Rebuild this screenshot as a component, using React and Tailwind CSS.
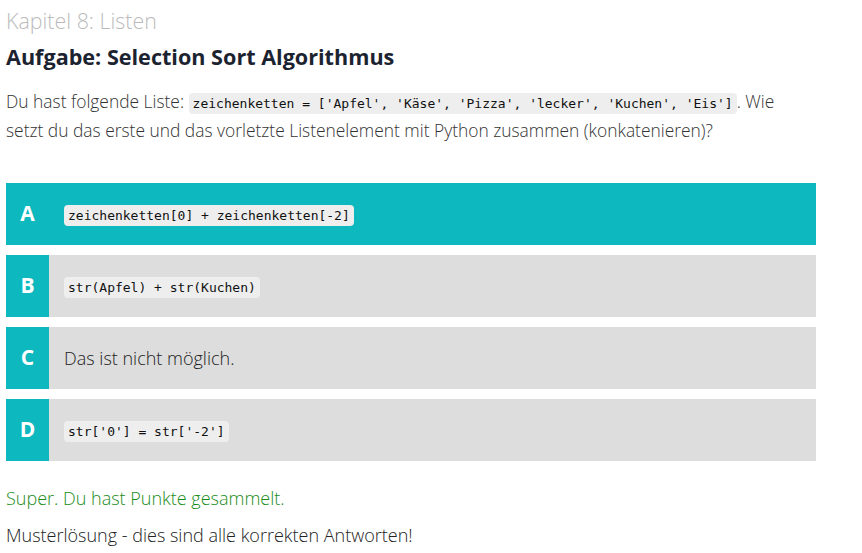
import React from 'react'

const sans = { fontFamily: '"Open Sans", "Liberation Sans", sans-serif' }

const Code = ({ children }) => (
  <code className="rounded-[4px] bg-[#eeeeee] px-[4px] py-[3px] font-['DejaVu_Sans_Mono',monospace] text-[13px] text-[#111]">
    {children}
  </code>
)

const options = [
  { letter: 'A', content: <Code>zeichenketten[0] + zeichenketten[-2]</Code>, selected: true },
  { letter: 'B', content: <Code>str(Apfel) + str(Kuchen)</Code> },
  { letter: 'C', content: <span className="text-[18px] font-light text-[#222]">Das ist nicht möglich.</span> },
  { letter: 'D', content: <Code>str['0'] = str['-2']</Code> },
]

const Option = ({ letter, content, selected }) => (
  <div className={selected ? 'flex h-[62px] items-center bg-[#0db8be]' : 'flex h-[62px] items-center bg-[#dddddd]'}>
    <div className="flex h-full w-[43px] items-center justify-center bg-[#0db8be] text-[21px] font-bold text-white">
      {letter}
    </div>
    <div className="pl-[15px]">{content}</div>
  </div>
)

export default function App() {
  return (
    <div className="min-h-[553px] bg-white px-[6px] pt-[6px]" style={sans}>
      <div className="w-[810px]">
        <h2 className="text-[21.4px] font-light leading-[30px] text-[#bbbbbb]">Kapitel 8: Listen</h2>
        <h1 className="mt-[7px] text-[21.6px] font-bold leading-[28px] text-[#1c2330]">Aufgabe: Selection Sort Algorithmus</h1>

        <p className="mt-[17px] text-[17.4px] font-light leading-[27px] text-[#333]">
          Du hast folgende Liste: <Code>zeichenketten = ['Apfel', 'Käse', 'Pizza', 'lecker', 'Kuchen', 'Eis']</Code>. Wie
          setzt du das erste und das vorletzte Listenelement mit Python zusammen (konkatenieren)?
        </p>

        <div className="mt-[39px] flex flex-col gap-[10px]">
          {options.map((o) => (
            <Option key={o.letter} {...o} />
          ))}
        </div>

        <p className="mt-[24px] text-[18px] font-light leading-[26px] text-[#1a8c1a]">Super. Du hast Punkte gesammelt.</p>
        <p className="mt-[11px] text-[18px] font-light leading-[26px] text-[#222]">
          Musterlösung - dies sind alle korrekten Antworten!
        </p>
      </div>
    </div>
  )
}
